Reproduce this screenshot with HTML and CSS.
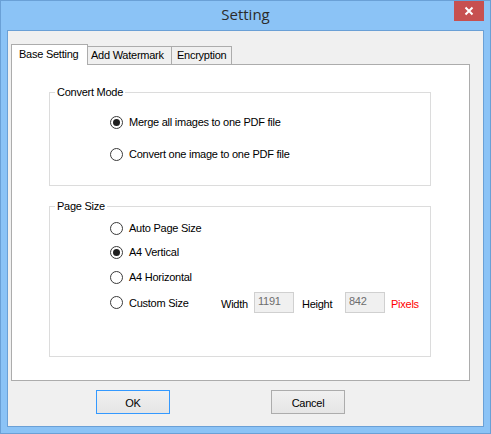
FILE: index.html
```html
<!DOCTYPE html>
<html>
<head>
<meta charset="utf-8">
<title>Setting</title>
<link rel="stylesheet" href="styles.css">
</head>
<body>
<div class="window">
  <div class="titlebar">
    <div class="title">Setting</div>
    <div class="close">
      <svg width="10" height="10" viewBox="0 0 10 10"><path d="M1.5 1.5 L8.5 8.5 M8.5 1.5 L1.5 8.5" stroke="#fff" stroke-width="2" fill="none"/></svg>
    </div>
  </div>
  <div class="client">
    <div class="tabs">
      <div class="tab tab-active tab-base">Base Setting</div>
      <div class="tab tab-water">Add Watermark</div>
      <div class="tab tab-enc">Encryption</div>
    </div>
    <div class="panel">
      <div class="group group-mode">
        <div class="legend">Convert Mode</div>
        <div class="row row-m1"><span class="radio checked"></span><span>Merge all images to one PDF file</span></div>
        <div class="row row-m2"><span class="radio"></span><span>Convert one image to one PDF file</span></div>
      </div>
      <div class="group group-size">
        <div class="legend">Page Size</div>
        <div class="row row-s1"><span class="radio"></span><span>Auto Page Size</span></div>
        <div class="row row-s2"><span class="radio checked"></span><span>A4 Vertical</span></div>
        <div class="row row-s3"><span class="radio"></span><span>A4 Horizontal</span></div>
        <div class="row row-custom">
          <div class="opt"><span class="radio"></span><span>Custom Size</span></div>
          <span class="lbl lbl-w">Width</span>
          <div class="field">1191</div>
          <span class="lbl lbl-h">Height</span>
          <div class="field">842</div>
          <span class="pixels">Pixels</span>
        </div>
      </div>
    </div>
    <div class="buttons">
      <div class="btn btn-default">OK</div>
      <div class="btn">Cancel</div>
    </div>
  </div>
</div>
</body>
</html>
```
FILE: styles.css
```css
html, body {
  margin: 0;
  padding: 0;
}
body {
  width: 491px;
  height: 434px;
  overflow: hidden;
  font-family: "Liberation Sans", Arial, sans-serif;
  font-size: 11px;
  letter-spacing: -0.25px;
  color: #000;
}
.window {
  box-sizing: border-box;
  width: 491px;
  height: 434px;
  border: 1px solid #6aa0d6;
  background: #8bc3f6;
  display: flex;
  flex-direction: column;
}
.titlebar {
  height: 29px;
  display: grid;
  grid-template-columns: 1fr auto 1fr;
  align-items: start;
}
.title {
  grid-column: 2;
  font-family: "Open Sans", "Noto Sans", sans-serif;
  font-size: 15px;
  letter-spacing: 0;
  color: #2b2b2b;
  line-height: 29px;
  margin-top: -1px;
}
.close {
  grid-column: 3;
  justify-self: end;
  margin-right: 6px;
  width: 30px;
  height: 20px;
  background: #c75050;
  display: flex;
  align-items: center;
  justify-content: center;
}
.close svg {
  display: block;
}
.client {
  box-sizing: border-box;
  margin: 0 6px;
  height: 397px;
  border: 1px solid #6aa0d6;
  background: #f0f0f0;
  padding: 13px 0 0 3px;
}
.tabs {
  display: flex;
  align-items: flex-end;
  height: 20px;
  position: relative;
  z-index: 1;
}
.tab {
  box-sizing: border-box;
  height: 18px;
  border: 1px solid #acacac;
  border-bottom: none;
  background: #f0f0f0;
  line-height: 17px;
  white-space: nowrap;
}
.tab-active {
  height: 21px;
  margin-bottom: -1px;
  background: #fff;
  line-height: 19px;
}
.tab-base {
  width: 77px;
  padding-left: 7px;
}
.tab-water {
  width: 85px;
  margin-left: -1px;
  padding-left: 3px;
}
.tab-enc {
  width: 61px;
  margin-left: -1px;
  padding-left: 5px;
}
.panel {
  box-sizing: border-box;
  width: 459px;
  height: 317px;
  border: 1px solid #acacac;
  background: #fff;
  padding: 27px 0 0 37px;
}
.group {
  box-sizing: border-box;
  width: 382px;
  border: 1px solid #dcdcdc;
  display: flex;
  flex-direction: column;
}
.group-mode {
  height: 94px;
}
.group-size {
  height: 151px;
  margin-top: 20px;
}
.legend {
  align-self: flex-start;
  margin: -7px 0 0 5px;
  padding: 0 2px;
  line-height: 13px;
  background: #fff;
}
.row {
  display: flex;
  align-items: center;
  height: 16px;
  padding-left: 60px;
  white-space: nowrap;
}
.row-m1 { margin-top: 15px; }
.row-m2 { margin-top: 16px; }
.row-s1 { margin-top: 7px; }
.row-s2 { margin-top: 8px; }
.row-s3 { margin-top: 9px; }
.row-custom {
  margin-top: 7px;
  height: 21px;
}
.radio {
  box-sizing: border-box;
  width: 13px;
  height: 13px;
  border: 1px solid #3a3a3a;
  border-radius: 50%;
  background: #fff;
  margin-right: 6px;
  flex: none;
  display: flex;
  align-items: center;
  justify-content: center;
}
.radio.checked::after {
  content: "";
  width: 7px;
  height: 7px;
  border-radius: 50%;
  background: #1f1f1f;
}
.opt {
  display: flex;
  align-items: center;
  width: 111px;
}
.lbl-w {
  width: 33px;
  margin-top: 3px;
}
.lbl-h {
  width: 43px;
  margin-left: 8px;
  margin-top: 3px;
}
.field {
  box-sizing: border-box;
  width: 40px;
  height: 21px;
  border: 1px solid #d0d0d0;
  background: #f0f0f0;
  color: #6d6d6d;
  padding-left: 3px;
  line-height: 17px;
}
.pixels {
  margin-left: 6px;
  margin-top: 3px;
  color: #ff0000;
}
.buttons {
  display: flex;
  gap: 101px;
  padding: 9px 0 0 85px;
}
.btn {
  box-sizing: border-box;
  width: 74px;
  height: 24px;
  border: 1px solid #acacac;
  background: linear-gradient(#f0f0f0, #e5e5e5);
  display: flex;
  align-items: center;
  justify-content: center;
  padding-top: 1px;
}
.btn-default {
  border-color: #3399ff;
}
```
